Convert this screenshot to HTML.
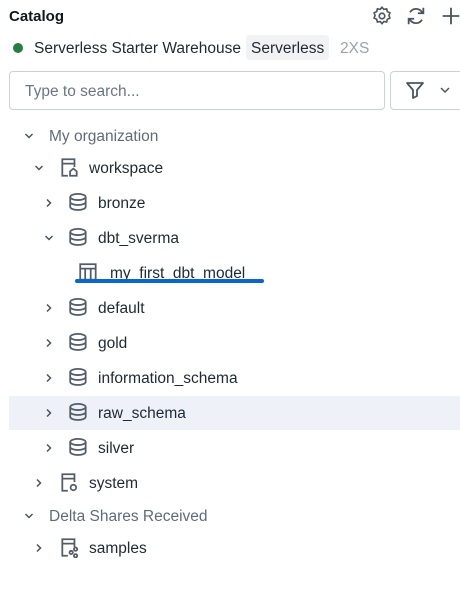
<!DOCTYPE html><html><head><style>
body{margin:0;width:460px;height:612px;background:#fff;font-family:"Liberation Sans",sans-serif;color:#1f2933;position:relative;overflow:hidden}
.a{position:absolute;white-space:nowrap}
.t{font-size:15.5px;line-height:20px}
.g{color:#5f6b7a}
svg{position:absolute}
</style></head><body>
<div class="a" style="left:9px;top:8px;font-size:15px;font-weight:bold;color:#11171c">Catalog</div>
<svg style="left:371px;top:5px" width="22" height="22" viewBox="0 0 24 24" fill="none" stroke="#4a5560" stroke-width="1.8"><circle cx="12" cy="12" r="3"/><path d="M12 2.5l2 2.3 3-.6.8 3 2.8 1.3-1 2.9 1 2.9-2.8 1.3-.8 3-3-.6-2 2.3-2-2.3-3 .6-.8-3-2.8-1.3 1-2.9-1-2.9 2.8-1.3.8-3 3 .6z"/></svg>
<svg style="left:405px;top:5px" width="22" height="22" viewBox="0 0 24 24" fill="none" stroke="#4a5560" stroke-width="2"><path d="M19 9a7.5 7.5 0 0 0-13.5-1M5 15a7.5 7.5 0 0 0 13.5 1"/><path d="M20 3v6h-6M4 21v-6h6"/></svg>
<svg style="left:440px;top:5px" width="22" height="22" viewBox="0 0 24 24" stroke="#4a5560" stroke-width="2"><path d="M12 3v18M3 12h18"/></svg>
<div class="a" style="left:13px;top:43px;width:10px;height:10px;border-radius:50%;background:#277c43"></div>
<div class="a t" style="left:34px;top:39px">Serverless Starter Warehouse</div>
<div class="a t" style="left:246px;top:35px;height:25px;line-height:27px;padding:0 5px;background:#f0f2f4;border-radius:4px;">Serverless</div>
<div class="a t" style="left:340px;top:39px;color:#9aa3ad">2XS</div>
<div class="a" style="left:9px;top:71px;width:374px;height:37px;border:1px solid #cbd1d8;border-radius:4px"></div>
<div class="a t" style="left:25px;top:82px;color:#6b7682">Type to search...</div>
<div class="a" style="left:390px;top:71px;width:80px;height:37px;border:1px solid #cbd1d8;border-radius:4px"></div>
<svg style="left:405px;top:80px" width="20" height="20" viewBox="0 0 20 20" fill="none" stroke="#4a5560" stroke-width="1.8" stroke-linejoin="round"><path d="M2 3h16l-6 7v6l-4 2v-8z"/></svg>
<svg style="left:440px;top:86px" width="10" height="8" viewBox="0 0 10 8" fill="none" stroke="#4a5560" stroke-width="1.5"><path d="M1 2l4 4 4-4"/></svg>
<div class="a" style="left:9px;top:396px;width:451px;height:34px;background:#eef2f8"></div>
<div id="tree"></div>
<div class="a" style="left:75px;top:279px;width:189px;height:4px;border-radius:2px;background:#0a67c7"></div>
<script>
const rows=[
[136,"My organization",0,"d",null,1],
[168,"workspace",1,"d","ws"],
[203,"bronze",2,"r","db"],
[238,"dbt_sverma",2,"d","db"],
[273,"my_first_dbt_model",3,null,"tb"],
[308,"default",2,"r","db"],
[343,"gold",2,"r","db"],
[378,"information_schema",2,"r","db"],
[413,"raw_schema",2,"r","db"],
[448,"silver",2,"r","db"],
[483,"system",1,"r","sys"],
[516,"Delta Shares Received",0,"d",null,1],
[548,"samples",1,"r","sh"]];
const icons={
db:'<ellipse cx="9" cy="4.5" rx="7" ry="2.8"/><path d="M2 4.5v9c0 1.5 3 2.8 7 2.8s7-1.3 7-2.8v-9M2 9c0 1.5 3 2.8 7 2.8S16 10.5 16 9"/>',
ws:'<path d="M8 17H3V2h11v7M3 6h11"/><path d="M10 17v-4l3-2.5 3 2.5v4z"/>',
sys:'<path d="M8 17H3V2h11v7M3 6h11"/><circle cx="13" cy="14" r="2.5"/>',
sh:'<path d="M8 17H3V2h11v7M3 6h11"/><circle cx="15" cy="11" r="1.5"/><circle cx="11" cy="14" r="1.5"/><circle cx="15" cy="17" r="1.5"/>',
tb:'<rect x="2" y="2" width="14" height="14"/><path d="M2 6h14M6.5 6v10M11.5 6v10"/>'};
let h="";
for(const [y,t,l,c,ic,grey] of rows){
 const cx=[24,34,44,0][l];
 if(c){h+=`<svg style="left:${cx}px;top:${y-5}px" width="10" height="10" viewBox="0 0 10 10" fill="none" stroke="#4a5560" stroke-width="1.5">${c=="d"?'<path d="M1.5 3l3.5 3.5L8.5 3"/>':'<path d="M3 1.5l3.5 3.5L3 8.5"/>'}</svg>`}
 let tx;
 if(grey){tx=cx+25}
 else{const ix=[0,59,68,78][l];h+=`<svg style="left:${ix}px;top:${y-11}px" width="21" height="21" viewBox="0 0 19 19" fill="none" stroke="#525d69" stroke-width="1.6">${icons[ic]}</svg>`;tx=ix+30+(l==3?2:0)}
 h+=`<div class="a t ${grey?'g':''}" style="left:${tx}px;top:${y-9}px">${t}</div>`;
}
document.getElementById("tree").innerHTML=h;
</script>
</body></html>
